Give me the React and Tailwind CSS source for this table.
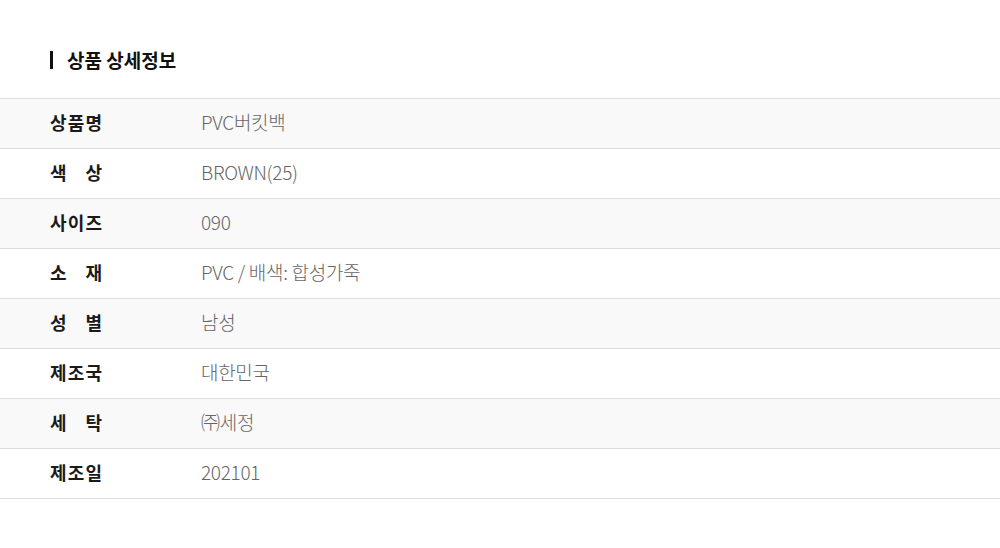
export default function App() {
  const rows = [
    ["상품명", "PVC버킷백"],
    ["색상", "BROWN(25)"],
    ["사이즈", "090"],
    ["소재", "PVC / 배색: 합성가죽"],
    ["성별", "남성"],
    ["제조국", "대한민국"],
    ["세탁", "㈜세정"],
    ["제조일", "202101"],
  ];
  return (
    <div
      className="w-[1000px] h-[548px] bg-white"
      style={{ fontFamily: '"Noto Sans CJK KR", "Noto Sans", sans-serif' }}
    >
      <div className="pt-[47px] pl-[50px] flex items-center h-[72px]">
        <div className="w-[3px] h-[18px] bg-[#111]" />
        <div className="ml-[14px] text-[19px] font-bold text-[#111] leading-[24px]">상품 상세정보</div>
      </div>
      <div className="mt-[26px] border-t border-[#dddddd]">
        {rows.map(([k, v], i) => (
          <div
            key={i}
            className={`h-[50px] flex items-center border-b border-[#dddddd] ${i % 2 === 0 ? "bg-[#f9f9f9]" : "bg-white"}`}
          >
            <div className="w-[201px] shrink-0 pl-[50px] -mt-[4px]">
              <div className="w-[52px] flex justify-between text-[18px] leading-[24px] font-bold text-[#1a1a1a]">
                {k.split("").map((c, j) => (
                  <span key={j}>{c}</span>
                ))}
              </div>
            </div>
            <div className="text-[19px] leading-[24px] font-light text-[#666] tracking-[-0.3px] -mt-[3px]">{v}</div>
          </div>
        ))}
      </div>
    </div>
  );
}
